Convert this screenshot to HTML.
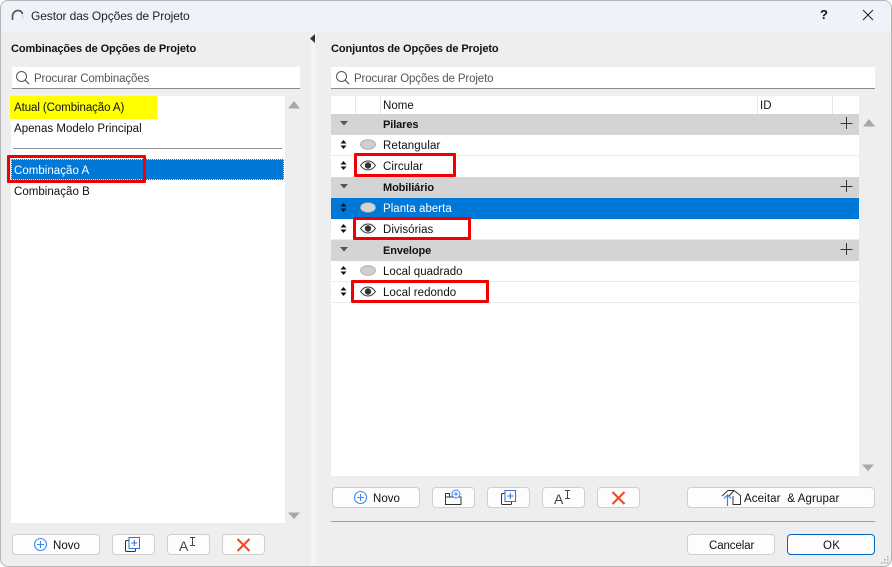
<!DOCTYPE html>
<html><head><meta charset="utf-8">
<style>
html,body{margin:0;padding:0;width:892px;height:567px;overflow:hidden;background:#fff}
body{font-family:"Liberation Sans",sans-serif;font-size:11.5px;color:#111;position:relative}
div,span,svg{position:absolute;box-sizing:border-box}
.t{white-space:nowrap;letter-spacing:.03px;line-height:14px;height:14px;margin-top:1px}
.n{margin-top:0}
.b{font-weight:bold;font-size:11px;letter-spacing:-.1px}
.btn{background:#fdfdfd;border:1px solid #cfcfcf;border-radius:4px;height:21px}
.grp{left:331px;width:528px;height:21px;background:#d4d4d4}
.line{left:331px;width:528px;height:1px;background:#ececec}
.red{border:3px solid #f00000;border-radius:1px}
</style></head><body>
<div id="win" style="left:0;top:0;width:892px;height:567px;background:#eeeeee;border:1px solid #b5b5b5;border-radius:8px;overflow:hidden"></div>
<div style="left:1px;top:1px;width:890px;height:30px;background:#eef3fa;border-radius:7px 7px 0 0"></div>
<svg style="left:10px;top:8px" width="16" height="14" viewBox="0 0 16 14"><path d="M2.500 12V8.500C2.500 5 5 2.500 8 2.500c2.500 0 4 1.500 4.500 3.500" fill="none" stroke="#555" stroke-width="1.700"/><path d="M11.500 6.500h2v4.500h-2z" fill="#ddd"/></svg>
<div class="t n" style="left:31px;top:9px;font-size:12px;letter-spacing:-.1px;color:#222">Gestor das Opções de Projeto</div>
<div class="t n" style="left:820px;top:8px;font-size:13px;letter-spacing:0;font-weight:bold">?</div>
<svg style="left:861px;top:8px" width="14" height="14"><path d="M2 2l10 10M12 2L2 12" stroke="#222" stroke-width="1" fill="none"/></svg>

<div style="left:311px;top:31px;width:5px;height:535px;background:#f4f4f4"></div>
<svg style="left:310px;top:34px" width="6" height="9"><path d="M5 0v9L0 4.500z" fill="#333"/></svg>

<div class="t b" style="left:11px;top:41px">Combinações de Opções de Projeto</div>
<div style="left:12px;top:67px;width:288px;height:22px;background:#fff;border-bottom:1px solid #8a8a8a"></div>
<svg style="left:15px;top:70px" width="16" height="16"><circle cx="6.500" cy="6.500" r="5" fill="none" stroke="#555" stroke-width="1"/><path d="M10 10l4 4" stroke="#555" stroke-width="1.200"/></svg>
<div class="t" style="left:34px;top:71px;color:#555;letter-spacing:-.12px">Procurar Combinações</div>

<div style="left:11px;top:96px;width:274px;height:427px;background:#fff"></div>
<div style="left:10px;top:96px;width:147px;height:23px;background:#ffff00"></div>
<div class="t" style="left:14px;top:100px;letter-spacing:-.08px">Atual (Combinação A)</div>
<div class="t" style="left:14px;top:121px;letter-spacing:.02px">Apenas Modelo Principal</div>
<div style="left:13px;top:148px;width:269px;height:1px;background:#8f8f8f"></div>
<div style="left:11px;top:159px;width:273px;height:21px;background:#0078d7;border:1px dotted #cfe4f7"></div>
<div class="t" style="left:14px;top:163px;color:#fff">Combinação A</div>
<div class="t" style="left:14px;top:184px">Combinação B</div>
<div class="red" style="left:7px;top:155px;width:139px;height:28px"></div>
<svg style="left:288px;top:101px" width="12" height="8"><path d="M0 7.500L6 0l6 7.500z" fill="#a8a8a8"/></svg>
<svg style="left:288px;top:512px" width="12" height="8"><path d="M0 .5L6 7l6-6.500z" fill="#a8a8a8"/></svg>

<div class="t b" style="left:331px;top:41px">Conjuntos de Opções de Projeto</div>
<div style="left:331px;top:67px;width:544px;height:22px;background:#fff;border-bottom:1px solid #8a8a8a"></div>
<svg style="left:335px;top:70px" width="16" height="16"><circle cx="6.500" cy="6.500" r="5" fill="none" stroke="#555" stroke-width="1"/><path d="M10 10l4 4" stroke="#555" stroke-width="1.200"/></svg>
<div class="t" style="left:354px;top:71px;color:#555;letter-spacing:-.12px">Procurar Opções de Projeto</div>

<div style="left:331px;top:96px;width:528px;height:380px;background:#fff"></div>
<div style="left:355px;top:96px;width:1px;height:18px;background:#e6e6e6"></div>
<div style="left:380px;top:96px;width:1px;height:18px;background:#e6e6e6"></div>
<div style="left:757px;top:96px;width:1px;height:18px;background:#e6e6e6"></div>
<div style="left:832px;top:96px;width:1px;height:18px;background:#e6e6e6"></div>
<div class="t" style="left:383px;top:98px">Nome</div>
<div class="t" style="left:760px;top:98px">ID</div>

<div class="grp" style="top:114px"></div>
<div class="grp" style="top:177px"></div>
<div class="grp" style="top:240px"></div>
<div style="left:331px;top:198px;width:528px;height:21px;background:#0078d7"></div>
<div class="line" style="top:155px"></div>
<div class="line" style="top:239px"></div>
<div class="line" style="top:281px"></div>
<div class="line" style="top:302px"></div>

<svg style="left:340px;top:121px" width="8" height="5"><path d="M0 0h8L4 4.500z" fill="#555"/></svg>
<svg style="left:340px;top:184px" width="8" height="5"><path d="M0 0h8L4 4.500z" fill="#555"/></svg>
<svg style="left:340px;top:247px" width="8" height="5"><path d="M0 0h8L4 4.500z" fill="#555"/></svg>
<div class="t b" style="left:383px;top:117px">Pilares</div>
<div class="t b" style="left:383px;top:180px">Mobiliário</div>
<div class="t b" style="left:383px;top:243px">Envelope</div>
<svg style="left:840px;top:117px" width="13" height="13"><path d="M6.500 0v12M.5 6.500h12" stroke="#333" stroke-width="1"/></svg>
<svg style="left:840px;top:180px" width="13" height="13"><path d="M6.500 0v12M.5 6.500h12" stroke="#333" stroke-width="1"/></svg>
<svg style="left:840px;top:243px" width="13" height="13"><path d="M6.500 0v12M.5 6.500h12" stroke="#333" stroke-width="1"/></svg>

<svg style="left:340px;top:140px" width="7" height="9"><path d="M3.500 0L6.500 3.500H.5zM3.500 9L.5 5.500h6z" fill="#111"/></svg>
<svg style="left:340px;top:161px" width="7" height="9"><path d="M3.500 0L6.500 3.500H.5zM3.500 9L.5 5.500h6z" fill="#111"/></svg>
<svg style="left:340px;top:203px" width="7" height="9"><path d="M3.500 0L6.500 3.500H.5zM3.500 9L.5 5.500h6z" fill="#111"/></svg>
<svg style="left:340px;top:224px" width="7" height="9"><path d="M3.500 0L6.500 3.500H.5zM3.500 9L.5 5.500h6z" fill="#111"/></svg>
<svg style="left:340px;top:266px" width="7" height="9"><path d="M3.500 0L6.500 3.500H.5zM3.500 9L.5 5.500h6z" fill="#111"/></svg>
<svg style="left:340px;top:287px" width="7" height="9"><path d="M3.500 0L6.500 3.500H.5zM3.500 9L.5 5.500h6z" fill="#111"/></svg>

<svg style="left:360px;top:139px" width="16" height="11"><ellipse cx="8" cy="5.500" rx="7.500" ry="4.800" fill="#cfcfcf" stroke="#aaa" stroke-width=".8"/></svg>
<svg style="left:360px;top:202px" width="16" height="11"><ellipse cx="8" cy="5.500" rx="7.500" ry="4.800" fill="#d4d4d4" stroke="#aaa" stroke-width=".8"/></svg>
<svg style="left:360px;top:265px" width="16" height="11"><ellipse cx="8" cy="5.500" rx="7.500" ry="4.800" fill="#cfcfcf" stroke="#aaa" stroke-width=".8"/></svg>
<svg style="left:360px;top:160px" width="16" height="11"><path d="M.5 5.500C3 2 5.500 1 8 1s5 1 7.500 4.500C13 9 10.500 10 8 10S3 9 .5 5.500z" fill="#fff" stroke="#333" stroke-width="1"/><circle cx="8" cy="5.500" r="3.200" fill="#333"/></svg>
<svg style="left:360px;top:223px" width="16" height="11"><path d="M.5 5.500C3 2 5.500 1 8 1s5 1 7.500 4.500C13 9 10.500 10 8 10S3 9 .5 5.500z" fill="#fff" stroke="#333" stroke-width="1"/><circle cx="8" cy="5.500" r="3.200" fill="#333"/></svg>
<svg style="left:360px;top:286px" width="16" height="11"><path d="M.5 5.500C3 2 5.500 1 8 1s5 1 7.500 4.500C13 9 10.500 10 8 10S3 9 .5 5.500z" fill="#fff" stroke="#333" stroke-width="1"/><circle cx="8" cy="5.500" r="3.200" fill="#333"/></svg>

<div class="t" style="left:383px;top:138px;letter-spacing:.12px">Retangular</div>
<div class="t" style="left:383px;top:159px;letter-spacing:.05px">Circular</div>
<div class="t" style="left:383px;top:201px;color:#fff">Planta aberta</div>
<div class="t" style="left:383px;top:222px;letter-spacing:.05px">Divisórias</div>
<div class="t" style="left:383px;top:264px;letter-spacing:.02px">Local quadrado</div>
<div class="t" style="left:383px;top:285px;letter-spacing:.02px">Local redondo</div>

<div class="red" style="left:354px;top:153px;width:102px;height:24px"></div>
<div class="red" style="left:353px;top:217px;width:118px;height:23px"></div>
<div class="red" style="left:351px;top:280px;width:138px;height:23px"></div>

<svg style="left:863px;top:119px" width="12" height="8"><path d="M0 7.500L6 0l6 7.500z" fill="#a8a8a8"/></svg>
<svg style="left:862px;top:464px" width="12" height="8"><path d="M0 .5L6 7l6-6.500z" fill="#a8a8a8"/></svg>

<!-- left buttons -->
<div class="btn" style="left:12px;top:534px;width:88px"></div>
<svg style="left:33px;top:537px" width="15" height="15"><circle cx="7.500" cy="7.500" r="6" fill="none" stroke="#3b86f0" stroke-width="1.100"/><path d="M7.500 4v7M4 7.500h7" stroke="#3b86f0" stroke-width="1"/></svg>
<div class="t n" style="left:53px;top:539px">Novo</div>
<div class="btn" style="left:112px;top:534px;width:43px"></div>
<svg style="left:125px;top:537px" width="16" height="16"><rect x=".5" y="3.500" width="10" height="11" rx="1" fill="none" stroke="#333"/><rect x="4" y=".5" width="10.500" height="11" fill="#fdfdfd" stroke="#3b6fd0"/><path d="M9.300 3v6M6.300 6h6" stroke="#3b6fd0"/></svg>
<div class="btn" style="left:167px;top:534px;width:43px"></div>
<div class="t n" style="left:179px;top:539px;font-size:14px;letter-spacing:0;color:#444">A</div>
<svg style="left:189px;top:537px" width="7" height="10"><path d="M1 .5h5M1 8.500h5M3.500.5v8" stroke="#444" stroke-width="1" fill="none"/></svg>
<div class="btn" style="left:222px;top:534px;width:43px"></div>
<svg style="left:236px;top:538px" width="15" height="14"><path d="M1.500 1l12 12M13.500 1l-12 12" stroke="#f0451e" stroke-width="2" fill="none"/></svg>

<!-- right buttons -->
<div class="btn" style="left:332px;top:487px;width:88px"></div>
<svg style="left:353px;top:490px" width="15" height="15"><circle cx="7.500" cy="7.500" r="6" fill="none" stroke="#3b86f0" stroke-width="1.100"/><path d="M7.500 4v7M4 7.500h7" stroke="#3b86f0" stroke-width="1"/></svg>
<div class="t n" style="left:373px;top:492px">Novo</div>
<div class="btn" style="left:432px;top:487px;width:43px"></div>
<svg style="left:444px;top:489px" width="19" height="17"><path d="M1.500 15.500V4.500h4V8h11.500v7.500z M1.500 8h4" fill="none" stroke="#333" stroke-width="1"/><circle cx="12" cy="5" r="4" fill="#fdfdfd" stroke="#3b86f0"/><path d="M12 2.800v4.400M9.800 5h4.400" stroke="#3b86f0"/></svg>
<div class="btn" style="left:487px;top:487px;width:43px"></div>
<svg style="left:501px;top:490px" width="16" height="16"><rect x=".5" y="3.500" width="10" height="11" rx="1" fill="none" stroke="#333"/><rect x="4" y=".5" width="10.500" height="11" fill="#fdfdfd" stroke="#3b6fd0"/><path d="M9.300 3v6M6.300 6h6" stroke="#3b6fd0"/></svg>
<div class="btn" style="left:542px;top:487px;width:43px"></div>
<div class="t n" style="left:554px;top:492px;font-size:14px;letter-spacing:0;color:#444">A</div>
<svg style="left:564px;top:490px" width="7" height="10"><path d="M1 .5h5M1 8.500h5M3.500.5v8" stroke="#444" stroke-width="1" fill="none"/></svg>
<div class="btn" style="left:597px;top:487px;width:43px"></div>
<svg style="left:611px;top:491px" width="15" height="14"><path d="M1.500 1l12 12M13.500 1l-12 12" stroke="#f0451e" stroke-width="2" fill="none"/></svg>

<div class="btn" style="left:687px;top:487px;width:188px"></div>
<svg style="left:721px;top:489px" width="21" height="17"><path d="M1 7L7 1.500h6L20 7M13 1.500L8 7M12 7v8.500h7.500V7" fill="none" stroke="#333" stroke-width="1"/><path d="M6.500 17V6M3 9.500L6.500 6 10 9.500" fill="none" stroke="#2f80ed" stroke-width="1.200"/></svg>
<div class="t n" style="left:744px;top:492px;letter-spacing:.12px;white-space:pre">Aceitar  &amp; Agrupar</div>

<div style="left:331px;top:521px;width:544px;height:1px;background:#a0a0a0"></div>
<div class="btn" style="left:687px;top:534px;width:88px"></div>
<div class="t n" style="left:709px;top:539px;letter-spacing:-.1px">Cancelar</div>
<div class="btn" style="left:787px;top:534px;width:88px;border-color:#0067c0;background:#fdfdfd"></div>
<div class="t n" style="left:823px;top:539px;letter-spacing:.3px">OK</div>
<svg style="left:880px;top:555px" width="10" height="10"><g fill="#aaa"><rect x="7" y="1" width="1.500" height="1.500"/><rect x="4" y="4" width="1.500" height="1.500"/><rect x="7" y="4" width="1.500" height="1.500"/><rect x="1" y="7" width="1.500" height="1.500"/><rect x="4" y="7" width="1.500" height="1.500"/><rect x="7" y="7" width="1.500" height="1.500"/></g></svg>
</body></html>
